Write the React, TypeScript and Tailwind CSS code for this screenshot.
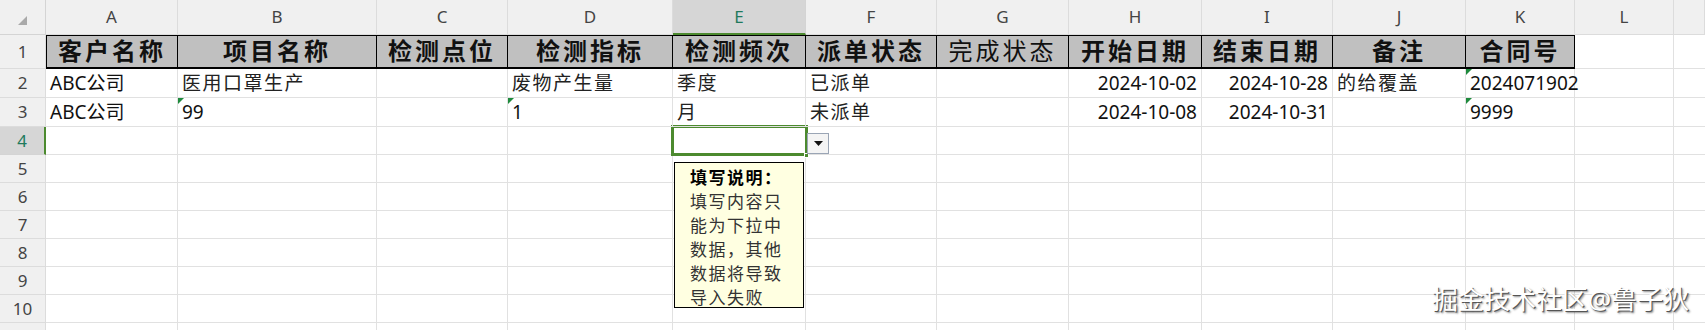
import React from 'react';

const letters = ['A', 'B', 'C', 'D', 'E', 'F', 'G', 'H', 'I', 'J', 'K', 'L', ''];

const headers = ['客户名称', '项目名称', '检测点位', '检测指标', '检测频次', '派单状态', '完成状态', '开始日期', '结束日期', '备注', '合同号'];

const rows: string[][] = [
  ['ABC公司', '医用口罩生产', '', '废物产生量', '季度', '已派单', '', '2024-10-02', '2024-10-28', '的给覆盖', '2024071902'],
  ['ABC公司', '99', '', '1', '月', '未派单', '', '2024-10-08', '2024-10-31', '', '9999'],
];

// cells that show the little green "number stored as text" marker: [row, col]
const flagged = ['0-10', '1-1', '1-3', '1-10'];

const sans = 'font-["Noto_Sans","Noto_Sans_CJK_SC",sans-serif]';

const App: React.FC = () => {
  return (
    <div className={`relative w-[1705px] h-[330px] overflow-hidden bg-white ${sans}`}>
      <div className="grid grid-cols-[46px_132px_199px_131px_165px_133px_131px_132px_133px_131px_133px_109px_99px_1fr] grid-rows-[35px_34px_29px_29px_28px_28px_28px_28px_28px_28px_28px_28px]">
        {/* Column letters */}
        <div className="relative bg-[#f0f0f0] border-r border-b border-[#d4d4d4]">
          <svg className="absolute left-[18px] top-[16px]" width="9" height="9" viewBox="0 0 9 9">
            <polygon points="9,0 9,9 0,9" fill="#a9a9a9" />
          </svg>
        </div>
        {letters.map((l, i) => (
          <div
            key={'c' + i}
            className={`flex items-center justify-center text-[17px] ${
              i === 4
                ? 'bg-[#d6d6d6] text-[#1f7a5c] border-b-2 border-b-[#4c8a2f] border-r border-r-[#d4d4d4]'
                : 'bg-[#f0f0f0] text-[#444] border-r border-b border-[#dcdcdc]'
            }`}
          >
            {l}
          </div>
        ))}

        {/* Row 1: header titles */}
        <div className="flex items-center justify-center bg-[#f0f0f0] text-[17px] text-[#444] border-r border-b border-[#dcdcdc]">1</div>
        {headers.map((h, i) => (
          <div
            key={'h' + i}
            className={`flex items-center justify-center bg-[#c0c0c0] border-t border-r border-b-2 border-black whitespace-nowrap text-[24px] tracking-[3px] text-[#111] font-["Liberation_Serif","Noto_Sans_CJK_SC",serif] ${
              i === 6 ? 'font-normal' : 'font-bold'
            } ${i === 0 ? 'border-l' : ''}`}
          >
            {h}
          </div>
        ))}
        <div className="border-r border-b border-[#e1e1e1]" />
        <div className="border-b border-[#e1e1e1]" />

        {/* Rows 2-3 data */}
        {rows.map((r, ri) => (
          <React.Fragment key={'r' + ri}>
            <div className="flex items-center justify-center bg-[#f0f0f0] text-[17px] text-[#444] border-r border-b border-[#dcdcdc]">
              {ri + 2}
            </div>
            {r.map((v, ci) => (
              <div
                key={ci}
                className={`relative flex items-end pb-[2px] whitespace-nowrap overflow-visible z-10 text-[19px] leading-[24px] text-[#111] border-r border-b border-[#e1e1e1] ${
                  ci === 7 || ci === 8 ? 'justify-end pr-[4px]' : 'pl-[4px]'
                }`}
              >
                {flagged.includes(ri + '-' + ci) && (
                  <svg className="absolute left-0 top-0" width="6" height="6" viewBox="0 0 6 6">
                    <polygon points="0,0 6,0 0,6" fill="#1e8a3c" />
                  </svg>
                )}
                <span className={/[\u4e00-\u9fa5]/.test(v) && !v.startsWith('ABC') ? 'tracking-[1.5px] text-[#222]' : ''}>{v}</span>
              </div>
            ))}
            <div className="border-r border-b border-[#e1e1e1]" />
            <div className="border-b border-[#e1e1e1]" />
          </React.Fragment>
        ))}

        {/* Rows 4-11 empty; row 11 is only a sliver at the bottom */}
        {[4, 5, 6, 7, 8, 9, 10, 11].map((n) => (
          <React.Fragment key={'e' + n}>
            <div
              className={`flex items-center justify-center text-[17px] border-b ${
                n === 4
                  ? 'bg-[#d6d6d6] text-[#1f7a5c] border-r-2 border-r-[#4c8a2f] border-b-[#d4d4d4]'
                  : 'bg-[#f0f0f0] text-[#444] border-r border-[#dcdcdc]'
              }`}
            >
              {n < 11 ? n : ''}
            </div>
            {letters.map((_, ci) => (
              <div key={ci} className={`border-b border-[#e1e1e1] ${ci < 12 ? 'border-r' : ''}`} />
            ))}
          </React.Fragment>
        ))}
      </div>

      {/* Active cell E4 */}
      <div className="absolute left-[671px] top-[125px] w-[137px] h-[31px] border-[3px] border-[#4c8a2f]" />
      <div className="absolute left-[804px] top-[153px] w-[5px] h-[5px] bg-[#4c8a2f] border border-white" />

      {/* Dropdown button */}
      <div className="absolute left-[807px] top-[133px] w-[22px] h-[21px] flex items-center justify-center bg-[#f4f4f4] border border-[#9aa5b5]">
        <svg width="9" height="5" viewBox="0 0 9 5">
          <polygon points="0,0 9,0 4.5,5" fill="#111" />
        </svg>
      </div>

      {/* Input message tooltip */}
      <div className="absolute left-[674px] top-[162px] w-[130px] h-[146px] bg-[#ffffe1] border border-black pl-[15px] pt-[4px] font-['Liberation_Serif','Noto_Sans_CJK_SC',serif] text-[17px] leading-[24px] tracking-[1.5px] text-[#333]">
        <div className="font-bold text-black">填写说明：</div>
        <div>填写内容只</div>
        <div>能为下拉中</div>
        <div>数据，其他</div>
        <div>数据将导致</div>
        <div>导入失败</div>
      </div>

      {/* Watermark */}
      <div className="absolute left-[1432px] top-[282px] text-[26px] leading-[34px] text-white whitespace-nowrap [text-shadow:1px_1px_0_#555,2px_2px_2px_rgba(0,0,0,0.45)]">
        掘金技术社区@鲁子狄
      </div>
    </div>
  );
};

export default App;
